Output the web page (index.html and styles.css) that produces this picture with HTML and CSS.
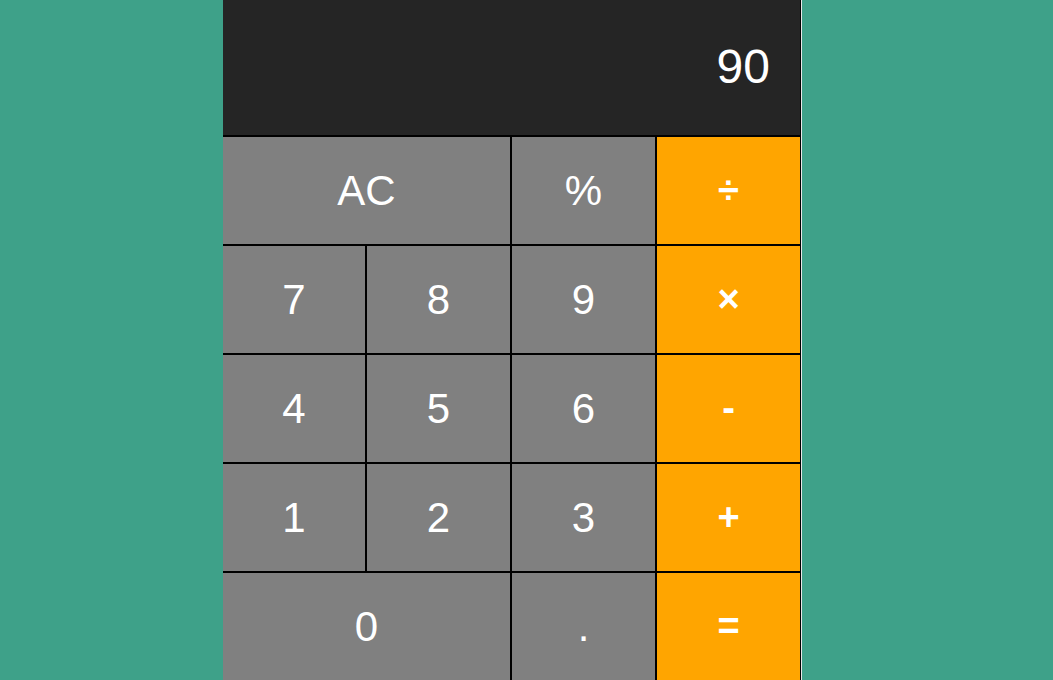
FILE: index.html
```html
<!DOCTYPE html>
<html>
<head>
<meta charset="utf-8">
<link rel="stylesheet" href="styles.css">
</head>
<body>
<div class="page">
  <div class="calc">
    <div class="display">90</div>
    <div class="keys">
      <div class="key wide">AC</div>
      <div class="key">%</div>
      <div class="key op">÷</div>
      <div class="key">7</div>
      <div class="key">8</div>
      <div class="key">9</div>
      <div class="key op">×</div>
      <div class="key">4</div>
      <div class="key">5</div>
      <div class="key">6</div>
      <div class="key op">-</div>
      <div class="key">1</div>
      <div class="key">2</div>
      <div class="key">3</div>
      <div class="key op">+</div>
      <div class="key wide">0</div>
      <div class="key">.</div>
      <div class="key op">=</div>
    </div>
  </div>
</div>
</body>
</html>
```
FILE: styles.css
```css
html, body {
  margin: 0;
  padding: 0;
  height: 100%;
  overflow: hidden;
}
body {
  background: #3ea189;
  font-family: "Liberation Sans", Arial, sans-serif;
  color: #fff;
}
.page {
  padding-left: 223px;
}
.calc {
  width: 577px;
  box-shadow: 1px 0 0 #000, 2px 0 0 #e8e8e8;
}
.display {
  height: 135px;
  background: #252525;
  font-size: 48px;
  text-align: right;
  padding-right: 30px;
  line-height: 134px;
  box-sizing: border-box;
}
.keys {
  display: grid;
  grid-template-columns: 142px 143px 143px 143px;
  grid-auto-rows: 107px;
  gap: 2px;
  padding-top: 2px;
  background: #000;
}
.key {
  background: #808080;
  display: flex;
  align-items: center;
  justify-content: center;
  font-size: 42px;
}
.key.wide {
  grid-column: span 2;
}
.key.op {
  background: #ffa500;
  font-weight: 700;
  font-size: 38px;
}
```
